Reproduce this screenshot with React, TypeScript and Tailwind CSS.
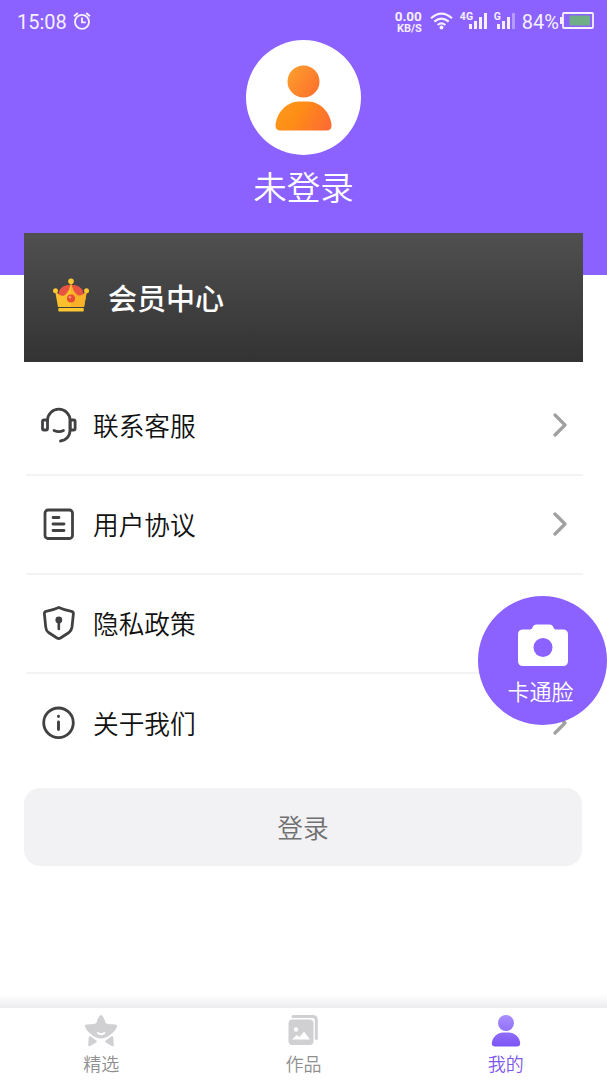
import React from "react";

const HeadsetIcon = () => (
  <svg width="38" height="38" viewBox="0 0 38 38" fill="none" stroke="#414143" strokeWidth="2.8" strokeLinecap="round">
    <path d="M7.500 14.500a11.300 11.300 0 0 1 22.600 0v9c0 7-4.500 11-9.600 11.500" />
    <rect x="2.500" y="14" width="5" height="10" rx="1.500" />
    <rect x="30.100" y="14" width="5" height="10" rx="1.500" />
    <path d="M14 24.500q5 2.200 9.500 0" />
  </svg>
);

const DocIcon = () => (
  <svg width="38" height="38" viewBox="0 0 38 38" fill="none" stroke="#414143" strokeWidth="2.800" strokeLinecap="round">
    <rect x="5" y="5" width="27.500" height="28.500" rx="3" />
    <path d="M13 12.500h6M13 19h11M13 25.500h11" />
  </svg>
);

const ShieldIcon = () => (
  <svg width="38" height="38" viewBox="0 0 38 38" fill="none" stroke="#414143" strokeWidth="2.800" strokeLinecap="round" strokeLinejoin="round">
    <path d="M18.800 3.500Q24 6 31.500 7.300Q33.500 7.800 33.400 9.800L32 23Q31.500 26.500 29 28.500L20.500 34Q18.800 35 17 34L8.500 28.500Q6 26.500 5.700 23L4.400 9.800Q4.300 7.800 6 7.300Q13.500 6 18.800 3.500Z" />
    <circle cx="18.800" cy="16" r="3.400" fill="#414143" stroke="none" />
    <path d="M18.800 17v8" strokeWidth="2.600" />
  </svg>
);

const InfoIcon = () => (
  <svg width="38" height="38" viewBox="0 0 38 38" fill="none" stroke="#414143" strokeWidth="2.800" strokeLinecap="round">
    <circle cx="18.500" cy="18.800" r="14.800" />
    <path d="M18.500 18v7.500M18.500 12.300v.3" strokeWidth="2.900" />
  </svg>
);

const CrownIcon = () => (
  <svg className="-mt-[5px]" width="36" height="34" viewBox="0 0 36 34">
    <path d="M5.500 16C5.500 3.500 30.500 3.500 30.500 16L25 24H11Z" fill="#e95442" />
    <path d="M2 12.500Q8 20 12 17Q17 12.500 18 4Q19 12.500 24 17Q28 20 34 12.500L31 29H5Z" fill="#fdc02d" />
    <path d="M18 4Q19 12.500 24 17Q28 20 34 12.500L31 29H18Z" fill="#f9b128" />
    <rect x="5.300" y="30" width="25.500" height="3.500" rx="1" fill="#fdc82f" />
    <circle cx="18" cy="3.200" r="2.800" fill="#fdc82f" />
    <circle cx="2.500" cy="12.800" r="2.500" fill="#fdc82f" />
    <circle cx="33.500" cy="12.800" r="2.500" fill="#fdc82f" />
    <circle cx="18" cy="20.500" r="4" fill="#e84b32" />
    <circle cx="17" cy="19.300" r="1.300" fill="#f4927c" />
  </svg>
);

const Chevron = () => (
  <svg width="16" height="24" viewBox="0 0 16 24" fill="none" stroke="#a0a0a0" strokeWidth="3.200" strokeLinecap="round" strokeLinejoin="round">
    <path d="M3 2L13 12L3 22" />
  </svg>
);

const items = [
  { label: "联系客服", icon: <HeadsetIcon /> },
  { label: "用户协议", icon: <DocIcon /> },
  { label: "隐私政策", icon: <ShieldIcon /> },
  { label: "关于我们", icon: <InfoIcon /> },
];

const StatusBar = () => (
  <div className="flex h-[43px] items-center justify-between pl-[17px] pr-[13px] font-['Roboto',sans-serif] font-normal text-[#f6efff]">
    <div className="flex items-center gap-[6px]">
      <span className="text-[20px] leading-none">15:08</span>
      <svg className="-mt-[2px]" width="18" height="18" viewBox="0 0 18 18" fill="none" stroke="currentColor" strokeWidth="1.900">
        <circle cx="9" cy="9.900" r="7" />
        <path d="M9 5.500v4.900h3.800M1 4.200L4.800 1M17 4.200L13.200 1" />
      </svg>
    </div>
    <div className="flex items-center">
      <div className="mr-[8px] flex w-[29px] flex-col items-end font-bold">
        <span className="block whitespace-nowrap text-[13.500px] leading-[13px]">0.00</span>
        <span className="block whitespace-nowrap text-[11px] leading-[11px]">KB/S</span>
      </div>
      <svg className="-mt-[2px] mr-[7px]" width="23" height="18" viewBox="0 0 23 18" fill="none" stroke="currentColor" strokeWidth="2.200">
        <path d="M1 6.300Q11.500-3 22 6.300M4.300 9.700Q11.500 3.400 18.700 9.700M7.600 13Q11.500 9.800 15.400 13" />
        <circle cx="11.500" cy="15.500" r="2" fill="currentColor" stroke="none" />
      </svg>
      <div className="relative mr-[6px] h-[18px] w-[28px]">
        <span className="absolute left-0 -top-px text-[10.500px] font-bold leading-[10px]">4G</span>
        <svg className="absolute -top-px left-[9px]" width="19" height="18" viewBox="0 0 19 18" fill="currentColor">
          <path d="M0 12h3v5H0zM5 9h3v8H5zM10 5h3v12h-3zM15 1h3v16h-3z" />
        </svg>
      </div>
      <div className="relative mr-[6px] h-[18px] w-[22px]">
        <span className="absolute -top-px left-0 text-[10.500px] font-bold leading-[10px]">G</span>
        <svg className="absolute -top-px left-[3px]" width="19" height="18" viewBox="0 0 19 18" fill="currentColor">
          <path d="M0 12h3v5H0zM5 9h3v8H5zM10 5h3v12h-3z" />
          <path d="M15 1h3v16h-3z" opacity=".4" />
        </svg>
      </div>
      <span className="mr-px text-[20px] leading-none">84%</span>
      <svg className="-mt-px" width="34" height="18" viewBox="0 0 34 18" fill="none">
        <rect x="3" y="1" width="30" height="15" rx="1" stroke="currentColor" strokeWidth="1.800" />
        <path d="M0 5h3v7H0z" fill="currentColor" />
        <path d="M9.500 3.500H30v10H9.500z" fill="#6fae87" />
      </svg>
    </div>
  </div>
);

const App = () => {
  return (
    <div className="relative flex h-[1080px] w-[607px] flex-col overflow-hidden bg-white font-['Noto_Sans_CJK_SC',sans-serif] font-[350]">
      <header className="h-[275px] shrink-0 bg-[#8b62ff]">
        <StatusBar />
        <div className="-mt-[3px] flex flex-col items-center">
          <div className="flex size-[115px] items-center justify-center rounded-full bg-white">
            <svg width="57" height="66" viewBox="0 0 57 66">
              <defs>
                <linearGradient id="head" x1="0" y1="0" x2="1" y2=".7">
                  <stop offset="0" stopColor="#fda12d" />
                  <stop offset="1" stopColor="#fc732c" />
                </linearGradient>
                <linearGradient id="torso" x1="0" y1=".3" x2="1" y2=".6">
                  <stop offset="0" stopColor="#fd981c" />
                  <stop offset=".4" stopColor="#fe8d16" />
                  <stop offset="1" stopColor="#fd6d31" />
                </linearGradient>
              </defs>
              <circle cx="28.500" cy="16.500" r="16" fill="url(#head)" />
              <path d="M.5 60.500C1 49 11 36.500 24 36.500h9C46 36.500 56 49 56.500 60.500Q56.500 65.500 51.500 65.500H5.500Q.5 65.500.5 60.500Z" fill="url(#torso)" />
            </svg>
          </div>
          <h1 className="mt-[8px] text-[33.5px] leading-[46px] text-white">未登录</h1>
        </div>
      </header>

      <main className="-mt-[42px] flex-1 px-6">
        <section className="flex h-[129px] w-[559px] items-center bg-linear-to-b from-[#505050] to-[#343334] pl-[29px]">
          <CrownIcon />
          <h2 className="ml-[19px] -mt-px text-[29px] font-medium leading-none text-white">会员中心</h2>
        </section>

        <ul className="mt-[15px] ml-[2px]">
          {items.map((item, i) => (
            <li
              key={item.label}
              className={`flex h-[99px] items-center pl-[14px] pr-[15px] ${i < items.length - 1 ? "border-b-2 border-[#f3f3f3] pb-px" : "pb-[2px]"}`}
            >
              {item.icon}
              <span className="ml-[15px] flex-1 text-[25.7px] leading-none text-[#111]">{item.label}</span>
              <Chevron />
            </li>
          ))}
        </ul>

        <button className="mt-[15px] flex h-[78px] w-[558px] items-center justify-center rounded-[16px] bg-[#f2f2f4] text-[25.7px] text-[#707072]">
          登录
        </button>
      </main>

      <div className="h-[14px] shrink-0 bg-linear-to-b from-white to-[#ececee]" />
      <nav className="grid h-[72px] shrink-0 grid-cols-3 bg-white text-[18px] leading-[24px] text-[#8f8f8f]">
        <div className="flex flex-col items-center pt-[5px]">
          <svg width="34" height="34" viewBox="0 0 34 34" fill="#d0d0d3" stroke="#d0d0d3" strokeLinejoin="round">
            <path d="M17 3.500Q18.500 5 20.500 11Q22 12.500 31.500 13Q31 16.500 26 20Q22 24 17 24Q12 24 8 20Q3 16.500 2.500 13Q12 12.500 13.500 11Q15.500 5 17 3.500Z" strokeWidth="3" />
            <path d="M6 24.500L11.500 28.500L5.500 32ZM28 24.500L22.500 28.500L28.500 32Z" strokeWidth="2.600" />
            <path d="M13.800 20q3.500 2.500 6.500 0" fill="none" stroke="white" strokeWidth="2" strokeLinecap="round" />
          </svg>
          <span className="mt-[4px]">精选</span>
        </div>
        <div className="flex flex-col items-center pt-[5px]">
          <svg width="34" height="34" viewBox="0 0 34 34">
            <path d="M7 3.500H27Q30.300 3.500 30.300 7V25.500" fill="none" stroke="#d0d0d3" strokeWidth="3" strokeLinecap="round" />
            <rect x="2.500" y="6.500" width="25" height="25.500" rx="4" fill="#d0d0d3" />
            <circle cx="10" cy="16.500" r="2.200" fill="white" />
            <path d="M6 26.500L10.500 22L13.500 24L18 18.500L24 26.500Z" fill="white" />
          </svg>
          <span className="mt-[4px]">作品</span>
        </div>
        <div className="flex flex-col items-center pt-[5px] text-[#7d58ed]">
          <svg width="34" height="34" viewBox="0 0 34 34">
            <defs>
              <linearGradient id="me" x1="0" y1="0" x2="0" y2="34" gradientUnits="userSpaceOnUse">
                <stop offset="0" stopColor="#aa92ff" />
                <stop offset="1" stopColor="#7c53f5" />
              </linearGradient>
            </defs>
            <circle cx="17" cy="10" r="8" fill="url(#me)" />
            <path d="M2.800 30.500C3 24 9 19.500 14 19.500h6c5 0 11 4.500 11.200 11Q31 33.500 28 33.500H6Q3 33.500 2.800 30.500Z" fill="url(#me)" />
          </svg>
          <span className="mt-[4px]">我的</span>
        </div>
      </nav>

      <button className="absolute right-0 top-[596px] flex size-[129px] flex-col items-center rounded-full bg-[#8b62ff] pt-[28px] text-white">
        <svg width="50" height="43" viewBox="0 0 50 43">
          <path d="M5 5.500H12Q14 5.500 14.500 3.500Q15.500.5 18.500.5H31.500Q34.500.5 35.500 3.500Q36 5.500 38 5.500H45Q50 5.500 50 10.500V37Q50 42 45 42H5Q0 42 0 37V10.500Q0 5.500 5 5.500Z" fill="white" />
          <circle cx="25" cy="23.500" r="9.500" fill="#8b62ff" />
        </svg>
        <span className="mt-[7px] -ml-[4px] text-[22px] leading-[32px]">卡通脸</span>
      </button>
    </div>
  );
};

export default App;
